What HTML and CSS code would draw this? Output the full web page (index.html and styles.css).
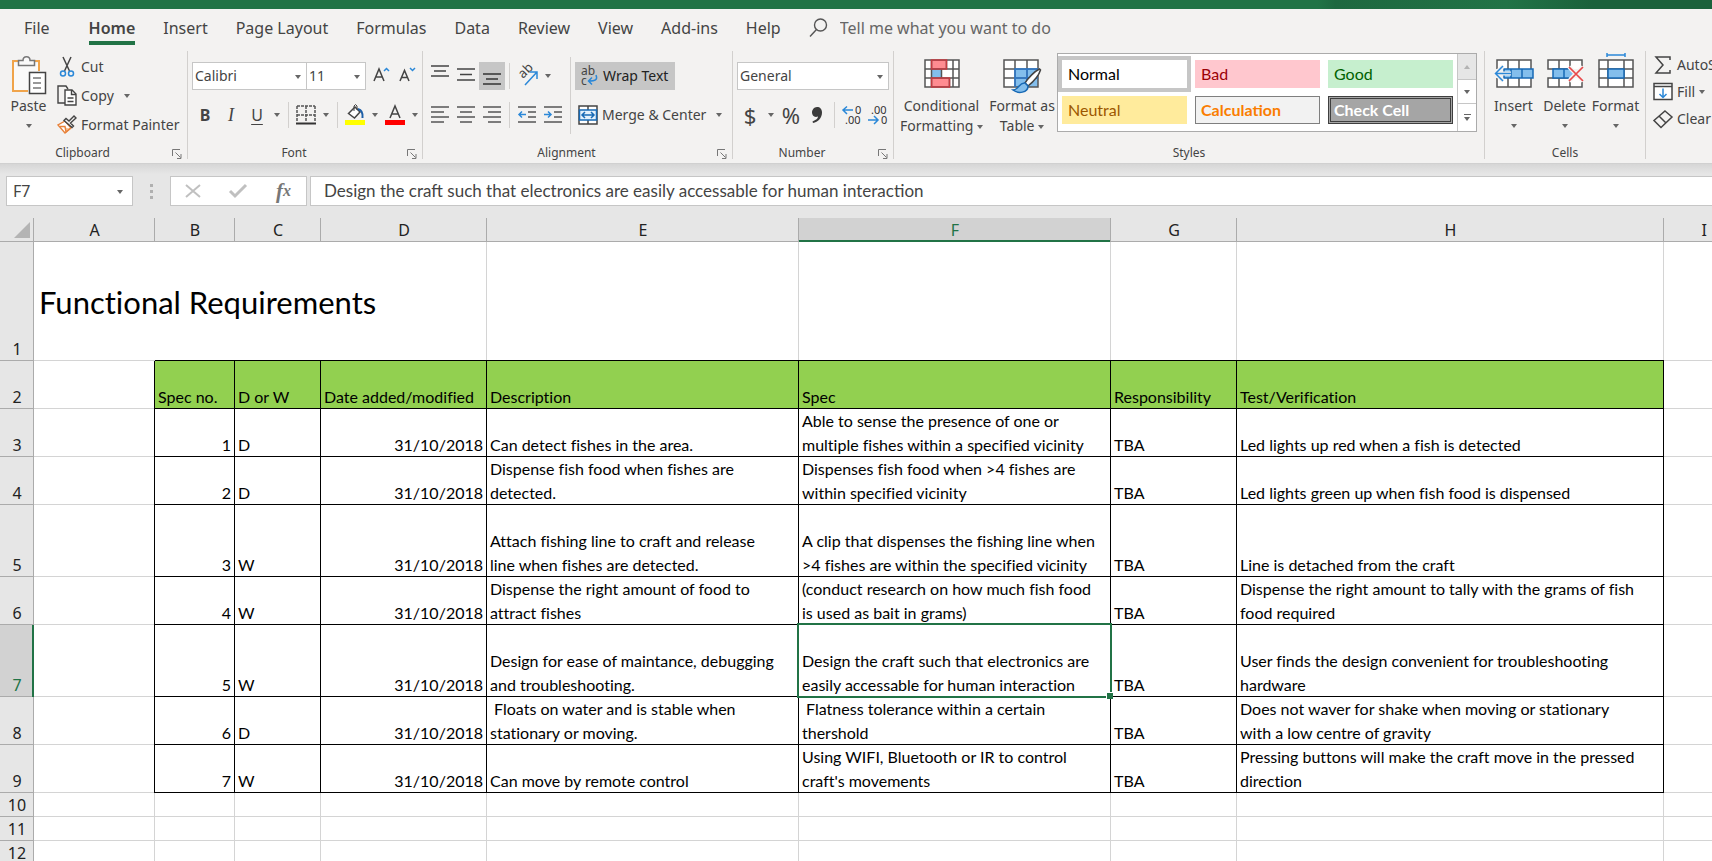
FILE: index.html
```html
<!DOCTYPE html>
<html lang="en">
<head>
<meta charset="utf-8">
<title>Functional Requirements</title>
<link rel="stylesheet" href="styles.css">
</head>
<body>
<div class="titlebar"></div>
<nav class="tabs">
  <a class="tab tab-file" href="#">File</a>
  <a class="tab active" href="#">Home</a>
  <a class="tab" href="#">Insert</a>
  <a class="tab" href="#">Page Layout</a>
  <a class="tab" href="#">Formulas</a>
  <a class="tab" href="#">Data</a>
  <a class="tab" href="#">Review</a>
  <a class="tab" href="#">View</a>
  <a class="tab" href="#">Add-ins</a>
  <a class="tab" href="#">Help</a>
  <label class="tellme">
    <svg width="19" height="20" viewBox="0 0 19 20" fill="none" stroke="#555" stroke-width="1.4"><circle cx="11.5" cy="7" r="6"/><path d="M7.5 11.5 1 18.5"/></svg>
    <input type="text" aria-label="Tell me what you want to do" placeholder="Tell me what you want to do">
  </label>
</nav>

<div class="ribbon">
  <section class="group g-clipboard">
    <div class="body">
      <button class="big paste">
        <svg width="36" height="40" viewBox="0 0 36 40" fill="none"><path d="M3 8h24v8h-9v19H3z" fill="#fafafa"/><path d="M8 6H2v30h15M24 6h4v10" stroke="#f0a44b" stroke-width="2"/><path d="M7.500 10.500v-5h4.500c0-5 7-5 7 0h4.500v5z" fill="#fafafa" stroke="#777" stroke-width="1.500"/><path d="M18.500 17.500h16v21h-16z" fill="#fff" stroke="#444" stroke-width="1.500"/><path d="M22 23h8M22 28h8M22 33h8" stroke="#777" stroke-width="1.500"/></svg>
        <span>Paste</span><i class="caret"></i>
      </button>
      <div class="stack">
        <button class="cmd">
          <svg width="20" height="20" viewBox="0 0 20 20" fill="none" stroke-width="1.500"><path d="M6 0l6.500 14M14 0 7.500 14" stroke="#444"/><circle cx="6" cy="16.500" r="2.500" stroke="#2b88d8"/><circle cx="14" cy="16.500" r="2.500" stroke="#2b88d8"/></svg>
          <span>Cut</span></button>
        <button class="cmd">
          <svg width="20" height="20" viewBox="0 0 20 20" fill="none" stroke="#444" stroke-width="1.400"><path d="M8 17H1V0h8l2 3"/><path d="M8 4h7l4 4v11H8z" fill="#fff"/><path d="M14.500 4v4.500H19M10.500 12h6M10.500 15.500h6"/></svg>
          <span>Copy</span><i class="caret"></i></button>
        <button class="cmd">
          <svg width="20" height="20" viewBox="0 0 20 20" fill="none" stroke-width="1.400"><path d="M8 6 1 10l7 8 6-5z" fill="#fff" stroke="#e8823a"/><path d="M3 11.500h5l1 5.500 4-3.500" fill="#f7c79b" stroke="#e8823a"/><path d="m7 5.500 8 7 1.500-1.500-3-3L19 3l-2-2-5 5-3-2.500z" fill="#f3f2f1" stroke="#444"/></svg>
          <span>Format Painter</span></button>
      </div>
    </div>
    <div class="foot"><span>Clipboard</span><button class="launch" aria-label="Clipboard settings"><svg width="10" height="10" viewBox="0 0 10 10" fill="none" stroke="#777"><path d="M.5 7V.5H8M3.500 3.500l5 5M9 5v4.500H5"/></svg></button></div>
  </section>

  <section class="group g-font">
    <div class="body rows">
      <div class="row">
        <span class="combo face"><select aria-label="Font"><option>Calibri</option></select></span>
        <span class="combo size"><select aria-label="Font size"><option>11</option></select></span>
        <button class="tool grow" aria-label="Increase font size"><svg width="18" height="20" viewBox="0 0 18 20" fill="none" stroke="#444" stroke-width="1.500"><path d="M1 15 6 3l5 12M3 11h6.500"/><path d="m11 5 2.500-2.500L16 5" stroke="#2b88d8"/></svg></button>
        <button class="tool" aria-label="Decrease font size"><svg width="18" height="20" viewBox="0 0 18 20" fill="none" stroke="#444" stroke-width="1.500"><path d="M1 15 5.500 4.500 10 15M3 11.500h5.500"/><path d="m11 2 2.500 2.500L16 2" stroke="#2b88d8"/></svg></button>
      </div>
      <div class="row">
        <button class="tool bold">B</button>
        <button class="tool italic">I</button>
        <button class="tool under">U</button>
        <button class="drop" aria-label="Underline options"><i class="caret"></i></button>
        <i class="sep"></i>
        <button class="tool" aria-label="Borders"><svg width="20" height="20" viewBox="0 0 20 20" fill="none" stroke="#555" stroke-width="1.500"><path d="M1 1h18M1 1v16M19 1v16M10 1v16M1 10h18" stroke-dasharray="3 1"/><path d="M0 18.500h20" stroke="#333" stroke-width="2"/></svg></button>
        <button class="drop" aria-label="Border options"><i class="caret"></i></button>
        <i class="sep"></i>
        <button class="tool" aria-label="Fill color"><svg width="20" height="20" viewBox="0 0 20 20" fill="none"><path d="M3.500 8.500 10 2l5 5-5.500 6z" fill="#fff" stroke="#444" stroke-width="1.500"/><path d="M9 6V1q1.500-3 3 0v4" stroke="#444"/><path d="M13 4c4 1 5 4 4.500 9" stroke="#1d5fa8" stroke-width="2"/><path d="M0 15h20v5H0z" fill="#ff0"/></svg></button>
        <button class="drop" aria-label="Fill options"><i class="caret"></i></button>
        <button class="tool" aria-label="Font color"><svg width="20" height="20" viewBox="0 0 20 20" fill="none"><path d="m5 13 5-12 5 12M7 9h6.500" stroke="#444" stroke-width="1.500"/><path d="M0 15h20v5H0z" fill="red"/></svg></button>
        <button class="drop" aria-label="Font color options"><i class="caret"></i></button>
      </div>
    </div>
    <div class="foot"><span>Font</span><button class="launch" aria-label="Font settings"><svg width="10" height="10" viewBox="0 0 10 10" fill="none" stroke="#777"><path d="M.5 7V.5H8M3.500 3.500l5 5M9 5v4.500H5"/></svg></button></div>
  </section>

  <section class="group g-align">
    <div class="body">
      <div class="rows">
        <div class="row">
          <button class="tool" aria-label="Top align"><svg width="18" height="20" viewBox="0 0 18 20" stroke="#444" stroke-width="1.500"><path d="M0 0h18M3 5h12M0 10h18"/></svg></button>
          <button class="tool" aria-label="Middle align"><svg width="18" height="20" viewBox="0 0 18 20" stroke="#444" stroke-width="1.500"><path d="M0 3h18M3 8.500h12M0 14h18"/></svg></button>
          <button class="tool on" aria-label="Bottom align"><svg width="18" height="20" viewBox="0 0 18 20" stroke="#333" stroke-width="1.500"><path d="M0 8h18M3 13h12M0 18h18"/></svg></button>
          <i class="sep"></i>
          <button class="tool" aria-label="Orientation"><svg width="22" height="20" viewBox="0 0 22 20" fill="none"><text class="orient-text" x="0" y="0" transform="translate(7 13) rotate(-45)">ab</text><path d="M9 19 21 6M14 6H21V13" stroke="#2b88d8" stroke-width="1.500"/></svg></button>
          <button class="drop" aria-label="Orientation options"><i class="caret"></i></button>
        </div>
        <div class="row">
          <button class="tool" aria-label="Align left"><svg width="18" height="18" viewBox="0 0 18 18" stroke="#555" stroke-width="1.500"><path d="M0 1h18M0 6h13M0 11h18M0 16h13"/></svg></button>
          <button class="tool" aria-label="Center"><svg width="18" height="18" viewBox="0 0 18 18" stroke="#555" stroke-width="1.500"><path d="M0 1h18M3 6h12M0 11h18M3 16h12"/></svg></button>
          <button class="tool" aria-label="Align right"><svg width="18" height="18" viewBox="0 0 18 18" stroke="#555" stroke-width="1.500"><path d="M0 1h18M5 6h13M0 11h18M5 16h13"/></svg></button>
          <i class="sep"></i>
          <button class="tool" aria-label="Decrease indent"><svg width="18" height="18" viewBox="0 0 18 18" fill="none" stroke="#555" stroke-width="1.500"><path d="M0 1h18M10 6h8M10 11h8M0 16h18"/><path d="M8 8.500H1M4 5.500l-3 3 3 3" stroke="#2b88d8"/></svg></button>
          <button class="tool" aria-label="Increase indent"><svg width="18" height="18" viewBox="0 0 18 18" fill="none" stroke="#555" stroke-width="1.500"><path d="M0 1h18M10 6h8M10 11h8M0 16h18"/><path d="M0 8.500h7M4 5.500l3 3-3 3" stroke="#2b88d8"/></svg></button>
        </div>
      </div>
      <i class="sep tall"></i>
      <div class="rows">
        <div class="row"><button class="cmd wrap on"><svg width="20" height="20" viewBox="0 0 20 20" fill="none"><text class="icon-text" x="2" y="9">ab</text><text class="icon-text" x="2" y="19">c</text><path d="M17 9c2 5-1 6-7 6M13 11.500 9.500 15l3.500 3.500" stroke="#2b88d8" stroke-width="1.500"/></svg><span>Wrap Text</span></button></div>
        <div class="row"><button class="cmd merge"><svg width="20" height="20" viewBox="0 0 20 20" fill="none"><path d="M1 1h18v18H1zM10 1v4M10 15v4" fill="#fff" stroke="#444" stroke-width="1.500"/><path d="M1.500 5h17v10h-17z" fill="#e3f0fb" stroke="#1769b5" stroke-width="1.500"/><path d="M4 10h12M7 7l-3 3 3 3M13 7l3 3-3 3" stroke="#1769b5" stroke-width="1.500"/></svg><span>Merge &amp; Center</span><i class="caret"></i></button></div>
      </div>
    </div>
    <div class="foot"><span>Alignment</span><button class="launch" aria-label="Alignment settings"><svg width="10" height="10" viewBox="0 0 10 10" fill="none" stroke="#777"><path d="M.5 7V.5H8M3.500 3.500l5 5M9 5v4.500H5"/></svg></button></div>
  </section>

  <section class="group g-number">
    <div class="body rows">
      <div class="row"><span class="combo format"><select aria-label="Number format"><option>General</option></select></span></div>
      <div class="row">
        <button class="tool glyph">$</button>
        <button class="drop" aria-label="Currency options"><i class="caret"></i></button>
        <button class="tool glyph">%</button>
        <button class="tool" aria-label="Comma style"><svg width="12" height="18" viewBox="0 0 12 18"><path d="M6 1c3 0 5 2 5 5.500C11 12 7 16 2 17l-.500-1.500C5 14 7 12.500 7 10.500 3 12 1 9 1 6.500S3 1 6 1z" fill="#3b3b3b"/></svg></button>
        <i class="sep"></i>
        <button class="tool" aria-label="Increase decimal"><svg width="20" height="20" viewBox="0 0 20 20" fill="none"><path d="M11 5H1M5 1.500 1 5l4 4" stroke="#2b88d8" stroke-width="1.500"/><text class="dec-text" x="13" y="9">0</text><text class="dec-text" x="3" y="19">.00</text></svg></button>
        <button class="tool" aria-label="Decrease decimal"><svg width="20" height="20" viewBox="0 0 20 20" fill="none"><path d="M0 15h10M6 11l4 4-4 4" stroke="#2b88d8" stroke-width="1.500"/><text class="dec-text" x="3" y="9">.00</text><text class="dec-text" x="13" y="19">0</text></svg></button>
      </div>
    </div>
    <div class="foot"><span>Number</span><button class="launch" aria-label="Number settings"><svg width="10" height="10" viewBox="0 0 10 10" fill="none" stroke="#777"><path d="M.5 7V.5H8M3.500 3.500l5 5M9 5v4.500H5"/></svg></button></div>
  </section>

  <section class="group g-styles">
    <div class="body">
      <button class="big cond">
        <svg width="36" height="40" viewBox="0 0 36 40" fill="none"><path d="M1 5h34v27H1z" fill="#fff"/><path d="M7.500 5h15v9h-15zM7.500 23h18v9h-18z" fill="#ff8c91"/><path d="M7.500 14h10v9h-10z" fill="#83beec"/><path d="M1 5h34v27H1zM1 14h34M1 23h34M7.500 5v27M29 5v27M22.500 5v9M17.500 14v9M25.500 23v9" stroke="#555" stroke-width="1.500"/><path d="M7.500 5h15v9h-15zM7.500 23h18v9h-18z" stroke="#c63a40" stroke-width="1.500"/></svg>
        <span>Conditional</span><span>Formatting <i class="caret"></i></span>
      </button>
      <button class="big fmt">
        <svg width="38" height="40" viewBox="0 0 38 40" fill="none"><path d="M1 5h34v27H1z" fill="#fff"/><path d="M12 14h23v18H12z" fill="#83beec"/><path d="M1 5h34v27H1zM1 14h34M1 23h34M12 5v27M24 5v27" stroke="#555" stroke-width="1.500"/><path d="M12 32V14h23M12 23h23M24 14v18" stroke="#2b7cd3" stroke-width="1.500"/><path d="M36.500 14C32 16 25 23 22 28l3 3c5-4 11-11 12.500-16z" fill="#fff" stroke="#444" stroke-width="1.500"/><path d="M22 28c-6-1-6 7-12 7 5 4 15 3 15-4z" fill="#83beec" stroke="#1769b5" stroke-width="1.500"/></svg>
        <span>Format as</span><span>Table <i class="caret"></i></span>
      </button>
      <div class="gallery">
        <div class="swatches">
          <button class="sw normal">Normal</button>
          <button class="sw bad">Bad</button>
          <button class="sw good">Good</button>
          <button class="sw neutral">Neutral</button>
          <button class="sw calc">Calculation</button>
          <button class="sw check">Check Cell</button>
        </div>
        <div class="scroller">
          <button class="up" aria-label="Previous styles" disabled><i class="caret"></i></button>
          <button aria-label="Next styles"><i class="caret"></i></button>
          <button class="more" aria-label="More styles"><i class="caret"></i></button>
        </div>
      </div>
    </div>
    <div class="foot"><span>Styles</span></div>
  </section>

  <section class="group g-cells">
    <div class="body">
      <button class="big cell"><svg width="40" height="40" viewBox="0 0 40 40" fill="none"><path d="M3 14V5h34v9M3 23v9h34v-9M14 5v9M25 5v9M14 23v9M25 23v9" fill="#fff" stroke="#555" stroke-width="1.500"/><path d="M10 14h29v9H10z" fill="#83beec" stroke="#1769b5" stroke-width="1.500"/><path d="M17 14v9M28 14v9" stroke="#1769b5" stroke-width="1.500"/><path d="M17 18.500H2M9 11l-7.500 7.500L9 26" stroke="#f3f2f1" stroke-width="4"/><path d="M17 18.500H2M9 11l-7.500 7.500L9 26" stroke="#2b88d8" stroke-width="1.500"/></svg><span>Insert</span><i class="caret"></i></button>
      <button class="big cell"><svg width="40" height="40" viewBox="0 0 40 40" fill="none"><path d="M3 14V5h34v9H3zM3 32v-9h34v9z" fill="#fff"/><path d="M24 14H3V5h34v6M24 23H3v9h34v-5M14 5v9M25 5v7M14 23v9M25 25v7" stroke="#555" stroke-width="1.500"/><path d="M8 14h16l4 4.500-4 4.500H8z" fill="#83beec"/><path d="M24 14H8v9h16M19 14v9" stroke="#1769b5" stroke-width="1.500"/><path d="m24 12 14 14M38 12 24 26" stroke="#f3f2f1" stroke-width="4"/><path d="m24 12 14 14M38 12 24 26" stroke="#e8484a" stroke-width="1.700"/></svg><span>Delete</span><i class="caret"></i></button>
      <button class="big cell"><svg width="40" height="40" viewBox="0 0 40 40" fill="none"><path d="M3 5h34v27H3zM3 14h34M3 23h34M12 5v27M28 5v27" fill="#fff" stroke="#555" stroke-width="1.500"/><path d="M12 14h16v9H12z" fill="#83beec" stroke="#1769b5" stroke-width="1.500"/><path d="M11 0h18M11 -2v4M29 -2v4" stroke="#2b88d8" stroke-width="1.500"/></svg><span>Format</span><i class="caret"></i></button>
    </div>
    <div class="foot"><span>Cells</span></div>
  </section>

  <section class="group g-edit">
    <div class="stack">
      <button class="cmd"><svg width="20" height="20" viewBox="0 0 20 20" fill="none" stroke="#444" stroke-width="1.500"><path d="M17 5V2H3l7 8-7 8h14v-3"/></svg><span>AutoSum</span><i class="caret"></i></button>
      <button class="cmd"><svg width="20" height="20" viewBox="0 0 20 20" fill="none" stroke="#444" stroke-width="1.500"><path d="M1 1.500h18v16H1zM1 4.500h18" fill="#fff"/><path d="M10 6.500v9M6.500 12l3.500 3.500 3.500-3.500" stroke="#2b88d8"/></svg><span>Fill</span><i class="caret"></i></button>
      <button class="cmd"><svg width="20" height="20" viewBox="0 0 20 20" fill="none" stroke="#444" stroke-width="1.500"><path d="M12 2l7 6L8 18.500l-7-7zM6 7l7 7"/></svg><span>Clear</span><i class="caret"></i></button>
    </div>
  </section>
</div>

<div class="formula-bar">
  <span class="combo name"><input type="text" aria-label="Name box" value="F7"></span>
  <span class="dots"><i></i><i></i><i></i></span>
  <div class="fx-buttons">
    <button aria-label="Cancel"><svg width="16" height="14" viewBox="0 0 16 14" stroke="#c0c0c0" stroke-width="2"><path d="m1 1 14 12M15 1 1 13"/></svg></button>
    <button aria-label="Enter"><svg width="18" height="14" viewBox="0 0 18 14" fill="none" stroke="#c0c0c0" stroke-width="3"><path d="m1 7 5 5L17 1"/></svg></button>
    <button class="fx" aria-label="Insert function">f<sub>x</sub></button>
  </div>
  <input class="formula" type="text" aria-label="Formula" value="Design the craft such that electronics are easily accessable for human interaction">
</div>

<main class="sheet">
<table>
  <colgroup><col class="c-row"><col class="c-a"><col class="c-b"><col class="c-c"><col class="c-d"><col class="c-e"><col class="c-f"><col class="c-g"><col class="c-h"><col class="c-i"></colgroup>
  <thead><tr><td class="corner"><i></i></td><th>A</th><th>B</th><th>C</th><th>D</th><th>E</th><th class="sel">F</th><th>G</th><th>H</th><th class="last">I</th></tr></thead>
  <tbody>
  <tr class="r-title"><th>1</th><td class="title">Functional Requirements</td><td class="ub"></td><td class="ub"></td><td class="ub edge"></td><td class="ub edge"></td><td class="ub edge"></td><td class="ub edge"></td><td class="ub edge"></td><td></td></tr>
  <tr class="r2 head"><th>2</th><td class="pre"></td><td>Spec no.</td><td>D or W</td><td>Date added/modified</td><td>Description</td><td>Spec</td><td>Responsibility</td><td>Test/Verification</td><td></td></tr>
  <tr class="r2 data"><th>3</th><td class="pre"></td><td class="num">1</td><td>D</td><td class="num">31/10/2018</td><td>Can detect fishes in the area.</td><td>Able to sense the presence of one or multiple fishes within a specified vicinity</td><td>TBA</td><td>Led lights up red when a fish is detected</td><td></td></tr>
  <tr class="r2 data"><th>4</th><td class="pre"></td><td class="num">2</td><td>D</td><td class="num">31/10/2018</td><td>Dispense fish food when fishes are detected.</td><td>Dispenses fish food when &gt;4 fishes are within specified vicinity</td><td>TBA</td><td>Led lights green up when fish food is dispensed</td><td></td></tr>
  <tr class="r3 data"><th>5</th><td class="pre"></td><td class="num">3</td><td>W</td><td class="num">31/10/2018</td><td>Attach fishing line to craft and release<br>line when fishes are detected.</td><td>A clip that dispenses the fishing line when &gt;4 fishes are within the specified vicinity</td><td>TBA</td><td>Line is detached from the craft</td><td></td></tr>
  <tr class="r2 data"><th>6</th><td class="pre"></td><td class="num">4</td><td>W</td><td class="num">31/10/2018</td><td>Dispense the right amount of food to attract fishes</td><td>(conduct research on how much fish food<br>is used as bait in grams)</td><td>TBA</td><td>Dispense the right amount to tally with the grams of fish food required</td><td></td></tr>
  <tr class="r3 data"><th class="sel">7</th><td class="pre"></td><td class="num">5</td><td>W</td><td class="num">31/10/2018</td><td>Design for ease of maintance, debugging and troubleshooting.</td><td class="cursor">Design the craft such that electronics are easily accessable for human interaction</td><td>TBA</td><td>User finds the design convenient for troubleshooting hardware</td><td></td></tr>
  <tr class="r2 data"><th>8</th><td class="pre"></td><td class="num">6</td><td>D</td><td class="num">31/10/2018</td><td>&nbsp;Floats on water and is stable when stationary or moving.</td><td>&nbsp;Flatness tolerance within a certain thershold</td><td>TBA</td><td>Does not waver for shake when moving or stationary<br>with a low centre of gravity</td><td></td></tr>
  <tr class="r2 data"><th>9</th><td class="pre"></td><td class="num">7</td><td>W</td><td class="num">31/10/2018</td><td>Can move by remote control</td><td>Using WIFI, Bluetooth or IR to control craft's movements</td><td>TBA</td><td>Pressing buttons will make the craft move in the pressed direction</td><td></td></tr>
  <tr class="r1"><th>10</th><td></td><td></td><td></td><td></td><td></td><td></td><td></td><td></td><td></td></tr>
  <tr class="r1"><th>11</th><td></td><td></td><td></td><td></td><td></td><td></td><td></td><td></td><td></td></tr>
  <tr class="r1"><th>12</th><td></td><td></td><td></td><td></td><td></td><td></td><td></td><td></td><td></td></tr>
  </tbody>
</table>
</main>
</body>
</html>
```
FILE: styles.css
```css
* { box-sizing: border-box; }
html, body { height: 100%; }
body {
  margin: 0;
  display: flex;
  flex-direction: column;
  overflow: hidden;
  background: #fff;
  color: #444;
  font: 14px/20px "Noto Sans", "Open Sans", sans-serif;
  font-variant-ligatures: none;
}
button, input, select {
  font: inherit;
  font-variant-ligatures: none;
  color: inherit;
  background: none;
  border: 0;
  border-radius: 0;
  padding: 0;
  margin: 0;
  outline: 0;
}
svg { display: block; flex: none; overflow: visible; }

.titlebar {
  flex: none;
  height: 9px;
  background: linear-gradient(90deg, #217346 77%, #1e6840 78%, #217346 88%, #1b613b 93%);
}

/* Tabs */
.tabs {
  flex: none;
  display: flex;
  gap: 28px;
  height: 36px;
  padding: 3px 24px 0;
  background: #f3f2f1;
  font-size: 16px;
  line-height: 32px;
}
.tab { color: #444; text-decoration: none; white-space: nowrap; height: 33px; }
.tab-file { margin-right: 11px; }
.tab.active { font-weight: 600; border-bottom: 4px solid #217346; }
.tellme { display: flex; flex: 1; gap: 12px; align-items: center; height: 32px; }
.tellme input { flex: 1; min-width: 0; }
.tellme input::placeholder { color: #666; opacity: 1; }

/* Ribbon */
.ribbon {
  flex: none;
  display: flex;
  height: 119px;
  padding: 6px 0 4px;
  overflow: hidden;
  background: #f3f2f1;
  border-bottom: 1px solid #d0d0d0;
}
.group {
  flex: none;
  display: flex;
  flex-direction: column;
  border-right: 1px solid #d2d0ce;
}
.body { flex: 1; display: flex; }
.foot { display: flex; height: 14px; margin-bottom: -1px; font-size: 12px; line-height: 14px; text-align: center; }
.foot span { flex: 1; }
.launch { width: 22px; display: flex; justify-content: flex-end; padding: 3px 5px 0 0; }
.g-clipboard { width: 188px; }
.g-font { width: 235px; }
.g-align { width: 310px; }
.g-number { width: 161px; }
.g-styles { width: 591px; }
.g-cells { width: 161px; }
.g-edit { flex: 1; border-right: 0; overflow: hidden; }

.caret {
  display: inline-block;
  flex: none;
  border: 3px solid transparent;
  border-top: 4px solid #666;
  border-bottom: 0;
  vertical-align: middle;
}
.stack { display: flex; flex-direction: column; padding-top: 1px; }
.cmd { display: flex; align-items: center; gap: 4px; height: 29px; white-space: nowrap; }
.cmd .caret { margin-left: 6px; }
.big { display: flex; flex-direction: column; align-items: center; line-height: 20px; padding-top: 4px; }
.big svg { margin-bottom: 1px; }
.big > .caret { margin-top: 8px; }
.paste { width: 57px; }
.cond { width: 95px; }
.fmt { width: 66px; }
.cell { width: 51px; }
.g-cells .body { padding-left: 3px; }
.g-edit .stack { padding-left: 7px; padding-top: 0; }
.g-edit .cmd { height: 27px; }
.g-edit .cmd .caret { margin-left: 0; }

.rows { display: flex; flex-direction: column; gap: 11px; padding: 11px 0 0 4px; }
.row { display: flex; align-items: center; height: 28px; }
.tool { flex: none; width: 26px; height: 28px; display: flex; align-items: center; justify-content: center; }
.drop { width: 15px; height: 28px; display: flex; align-items: center; justify-content: center; }
.grow { margin-left: 3px; }
.bold { font-weight: 700; font-size: 16px; }
.italic { font: italic 18px "Liberation Serif", serif; }
.under { font-size: 16px; text-decoration: underline; text-underline-offset: 3px; }
.glyph { font-size: 22px; }
.on { background: #c6c6c6; }
.sep { flex: none; width: 1px; height: 26px; margin: 0 4px; background: #d2d0ce; }
.sep.tall { height: 77px; margin: 6px 0 0 4px; }
.icon-text { font: 12px "Noto Sans", sans-serif; fill: #444; }
.orient-text { font: 13px "Noto Sans", sans-serif; fill: #444; }
.dec-text { font: 11px "Noto Sans", sans-serif; fill: #333; }
.wrap { width: 100px; height: 28px; padding-left: 4px; color: #222; }
.merge { padding-left: 3px; }

.combo { position: relative; display: flex; height: 28px; background: #fff; border: 1px solid #c6c6c6; }
.combo::after {
  content: "";
  position: absolute;
  right: 5px;
  top: 12px;
  border: 3px solid transparent;
  border-top: 4px solid #666;
  border-bottom: 0;
  pointer-events: none;
}
.combo select, .combo input { appearance: none; width: 100%; padding-left: 2px; }
.face { width: 115px; }
.size { width: 60px; margin-left: -1px; }
.format { width: 152px; }

/* Cell style gallery */
.gallery { display: flex; height: 79px; margin: 2px 0 0 2px; border: 1px solid #ababab; background: #fff; }
.swatches { display: grid; grid-template-columns: repeat(3, 125px); grid-auto-rows: 28px; gap: 8px; padding: 6px 4px; }
.sw { font: 16px/20px Lato, "Open Sans", sans-serif; text-align: left; padding-left: 6px; }
.normal { color: #000; background: #fff; box-shadow: 0 0 0 4px #c6c6c6; }
.bad { color: #9c0006; background: #ffc7ce; }
.good { color: #006100; background: #c6efce; }
.neutral { color: #9c5700; background: #ffeb9c; }
.calc { color: #fa7d00; background: #f2f2f2; border: 1px solid #7f7f7f; font-weight: 700; padding-left: 5px; }
.check { color: #fff; background: #a5a5a5; border: 3px double #3f3f3f; font-weight: 700; padding-left: 3px; }
.scroller { display: grid; grid-template-rows: 25px 24px 1fr; width: 19px; border-left: 1px solid #c6c6c6; }
.scroller button { display: flex; align-items: center; justify-content: center; }
.scroller button + button { border-top: 1px solid #c6c6c6; }
.scroller .up { background: #e6e6e6; }
.up .caret { transform: rotate(180deg); opacity: 0.4; }
.scroller .more { flex-direction: column; gap: 2px; }
.more::before { content: ""; width: 7px; height: 1px; background: #666; }

/* Formula bar */
.formula-bar {
  flex: none;
  display: flex;
  height: 54px;
  padding: 12px 0 12px 6px;
  background: linear-gradient(#d6d6d6, #e6e6e6 10px);
}
.name { width: 127px; height: 30px; font-size: 16px; }
.name::after { right: 9px; top: 13px; }
.combo.name input { padding-left: 6px; }
.dots { display: flex; flex-direction: column; gap: 3px; width: 37px; padding-top: 8px; align-items: center; }
.dots i { width: 3px; height: 3px; background: #b0b0b0; }
.fx-buttons { display: grid; grid-template-columns: 44px 46px 1fr; width: 137px; background: #fff; border: 1px solid #c6c6c6; }
.fx-buttons button { display: flex; align-items: center; justify-content: center; }
.fx { font: italic 700 21px/24px "Liberation Serif", serif; color: #777; }
.fx sub { font-size: 16px; line-height: 16px; vertical-align: baseline; }
.formula-bar .formula {
  flex: 1;
  min-width: 0;
  margin-left: 3px;
  padding-left: 13px;
  background: #fff;
  border: 1px solid #c6c6c6;
  border-right: 0;
  font: 17px/24px Lato, "Open Sans", sans-serif;
}

/* Sheet */
.sheet { flex: 1; min-height: 0; overflow: hidden; }
table { width: 100%; table-layout: fixed; border-spacing: 0; color: #000; font: 16px/24px Lato, "Open Sans", sans-serif; font-variant-ligatures: none; }
.c-row { width: 34px; }
.c-a { width: 121px; }
.c-b { width: 80px; }
.c-c { width: 86px; }
.c-d { width: 166px; }
.c-e, .c-f { width: 312px; }
.c-g { width: 126px; }
.c-h { width: 427px; }
td, th { padding: 0; }
th { font: 16px/24px "Noto Sans", sans-serif; color: #222; background: #e6e6e6; text-align: center; vertical-align: bottom; box-shadow: inset -1px -1px #ababab; }
td { padding: 0 4px 0 3px; vertical-align: bottom; box-shadow: inset -1px -1px #d4d4d4; }
thead tr { height: 24px; }
thead th.last { text-align: right; padding-right: 5px; box-shadow: inset 0 -1px #ababab; }
thead th.sel { color: #217346; background: #d2d2d2; box-shadow: inset -1px 0 #ababab, inset 0 -2px #217346; }
tbody th.sel { color: #217346; background: #d2d2d2; box-shadow: inset -2px 0 #217346, inset 0 -1px #ababab; }
.corner { background: #e6e6e6; box-shadow: inset -1px -1px #ababab; }
.corner i { display: block; width: 0; margin: 0 0 4px auto; border: 8px solid #b4b4b4; border-top-color: transparent; border-left-color: transparent; }
.r-title { height: 119px; }
.r2 { height: 48px; }
.r3 { height: 72px; }
.r1 { height: 24px; }
.title { font-size: 31px; line-height: 36px; white-space: nowrap; vertical-align: middle; padding-left: 5px; box-shadow: inset 0 -1px #d4d4d4; }
.ub { box-shadow: inset 0 -1px #000; }
.ub.edge { box-shadow: inset 0 -1px #000, inset -1px 0 #d4d4d4; }
.head td { background: #92d050; white-space: nowrap; }
.head td, .data td { box-shadow: inset -1px -1px #000; }
.head td.pre, .data td.pre { background: none; box-shadow: inset -1px 0 #000, inset 0 -1px #d4d4d4; }
tbody tr td:last-child { background: none; box-shadow: inset 0 -1px #d4d4d4; }
.num { text-align: right; }
.cursor { position: relative; }
.cursor::before { content: ""; position: absolute; inset: -2px -1px -1px -2px; border: 2px solid #217346; }
.cursor::after { content: ""; position: absolute; right: -2px; bottom: -2px; width: 6px; height: 6px; background: #217346; border: solid #fff; border-width: 1px 0 0 1px; }
```
